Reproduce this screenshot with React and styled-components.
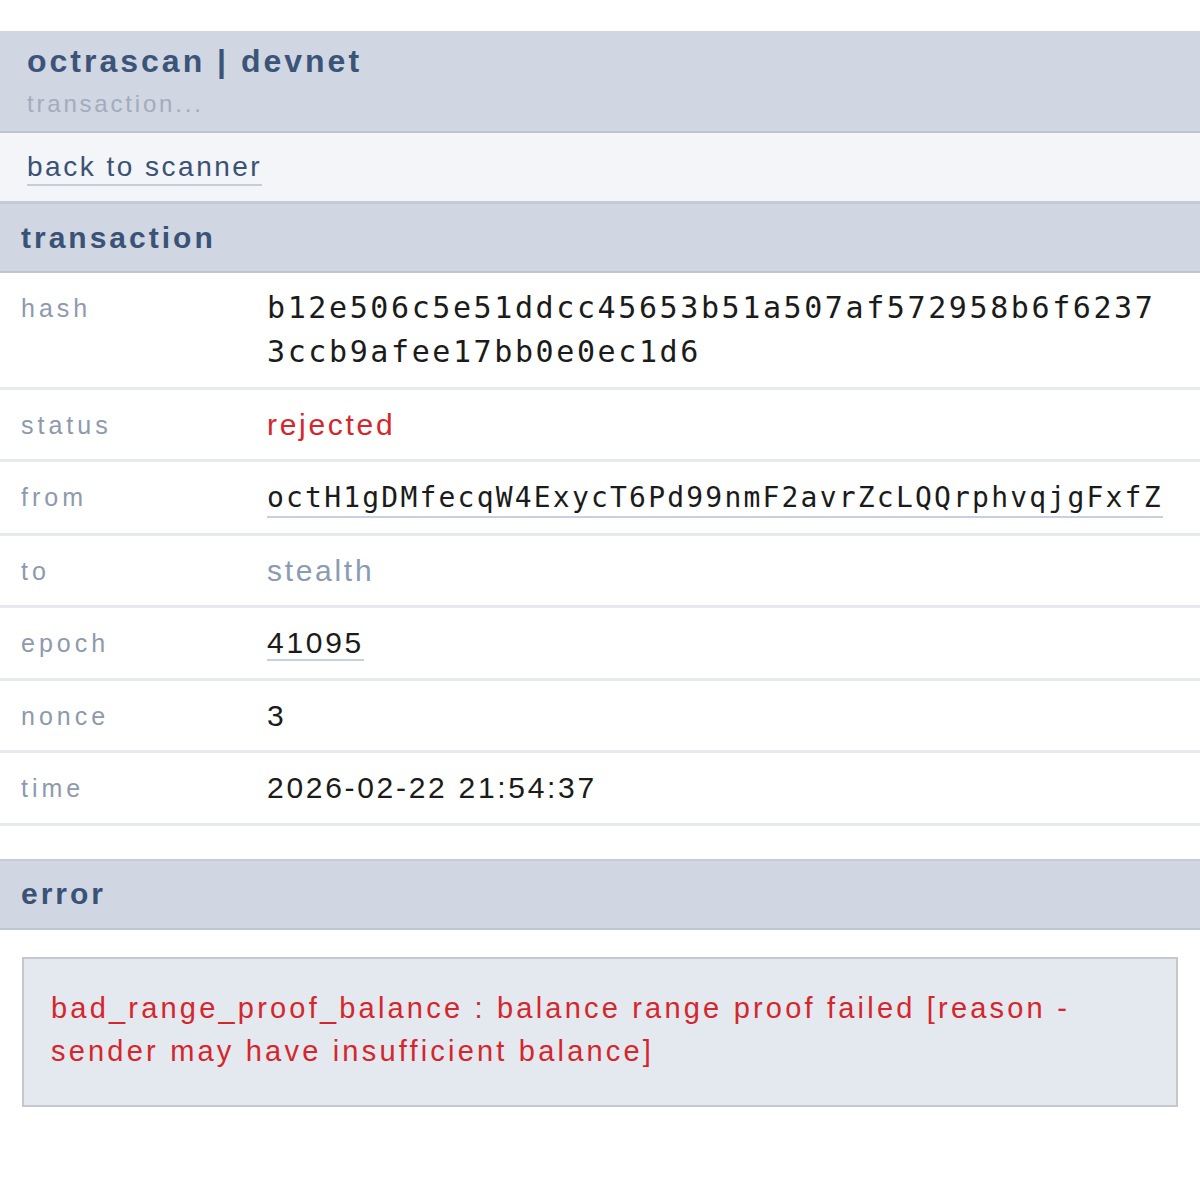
import React from "react";
import styled, { createGlobalStyle } from "styled-components";

const Global = createGlobalStyle`
  html, body { margin: 0; padding: 0; background: #ffffff; }
  body { font-family: "Liberation Sans", Arial, sans-serif; color: #1b1b1b; }
  * { box-sizing: border-box; }
`;

const Page = styled.div`
  padding-top: 31px;
  padding-bottom: 80px;
  background: #ffffff;
`;

const Header = styled.header`
  background: #d0d7e3;
  border-bottom: 2px solid #bcc4d0;
  padding: 12px 27px 12px;
  display: flex;
  flex-direction: column;
`;

const Title = styled.h1`
  margin: 0;
  font-size: 32px;
  line-height: 36px;
  font-weight: 700;
  letter-spacing: 3px;
  color: #3b5477;
`;

const Subtitle = styled.div`
  margin-top: 10px;
  font-size: 24px;
  line-height: 30px;
  letter-spacing: 2.8px;
  color: #a2acbb;
`;

const Nav = styled.nav`
  background: #f4f5f8;
  padding: 18px 27px 15px;
  display: flex;
`;

const NavLink = styled.a`
  display: inline-block;
  font-size: 28px;
  line-height: 32px;
  letter-spacing: 2.5px;
  color: #3a5276;
  text-decoration: none;
  padding-bottom: 1px;
  border-bottom: 2px solid #c6cdd8;
  cursor: pointer;
`;

const SectionHeader = styled.div`
  background: #d0d7e3;
  border-top: ${(p) => p.$topBorder}px solid #c4cbd6;
  border-bottom: 2px solid #bfc6d2;
  height: ${(p) => p.$height}px;
  box-sizing: content-box;
  padding: 0 21px;
  display: flex;
  align-items: center;
  font-size: 30px;
  font-weight: 700;
  letter-spacing: 3px;
  color: #3a5276;
  margin-top: ${(p) => p.$gap}px;
`;

const Rows = styled.div`
  display: flex;
  flex-direction: column;
`;

const Row = styled.div`
  display: grid;
  grid-template-columns: 246px 1fr;
  padding: 13px 30px 12.5px 21px;
  border-bottom: 3px solid #e6e9ee;
`;

const Label = styled.div`
  font-size: 25px;
  line-height: 44px;
  letter-spacing: 4px;
  color: #8d9aae;
`;

const Value = styled.div`
  font-family: ${(p) => (p.$mono ? '"DejaVu Sans Mono", "Liberation Mono", monospace' : '"Liberation Sans", Arial, sans-serif')};
  font-size: ${(p) => (p.$mono ? "30px" : "30px")};
  letter-spacing: ${(p) => (p.$mono ? "2.6px" : "2.7px")};
  line-height: 44px;
  color: ${(p) => (p.$tone === "red" ? "#d5262c" : p.$tone === "muted" ? "#8b9bb2" : "#1b1b1b")};
  word-break: break-all;
  min-width: 0;
`;

const ValueLink = styled.a`
  font-family: ${(p) => (p.$mono ? '"DejaVu Sans Mono", "Liberation Mono", monospace' : "inherit")};
  font-size: ${(p) => (p.$mono ? "28px" : "inherit")};
  letter-spacing: ${(p) => (p.$mono ? "2.2px" : "inherit")};
  color: #1b1b1b;
  text-decoration: none;
  border-bottom: 2px solid #c8d0db;
  padding-bottom: ${(p) => (p.$mono ? "2px" : "0px")};
  cursor: pointer;
`;

const ErrorBox = styled.div`
  margin: 27px 22px 0;
  background: #e4e8ef;
  border: 2px solid #c3c8d0;
  padding: 28px 27px 32px;
  font-size: 29px;
  line-height: 43px;
  letter-spacing: 3.2px;
  color: #d5262c;
`;

const rows = [
  { label: "hash", value: "b12e506c5e51ddcc45653b51a507af572958b6f62373ccb9afee17bb0e0ec1d6", mono: true },
  { label: "status", value: "rejected", tone: "red" },
  { label: "from", value: "octH1gDMfecqW4ExycT6Pd99nmF2avrZcLQQrphvqjgFxfZ", mono: true, link: true },
  { label: "to", value: "stealth", tone: "muted" },
  { label: "epoch", value: "41095", link: true },
  { label: "nonce", value: "3" },
  { label: "time", value: "2026-02-22 21:54:37" },
];

export default function App() {
  return (
    <Page>
      <Global />
      <Header>
        <Title>octrascan | devnet</Title>
        <Subtitle>transaction...</Subtitle>
      </Header>
      <Nav>
        <NavLink>back to scanner</NavLink>
      </Nav>
      <SectionHeader $topBorder={3} $height={67} $gap={0}>transaction</SectionHeader>
      <Rows>
        {rows.map((r) => (
          <Row key={r.label}>
            <Label>{r.label}</Label>
            {r.link ? (
              <Value $mono={r.mono && !r.link} $tone={r.tone}>
                <ValueLink $mono={r.mono}>{r.value}</ValueLink>
              </Value>
            ) : (
              <Value $mono={r.mono} $tone={r.tone}>{r.value}</Value>
            )}
          </Row>
        ))}
      </Rows>
      <SectionHeader $topBorder={2} $height={67} $gap={33}>error</SectionHeader>
      <ErrorBox>
        bad_range_proof_balance : balance range proof failed [reason - sender may have insufficient balance]
      </ErrorBox>
    </Page>
  );
}
